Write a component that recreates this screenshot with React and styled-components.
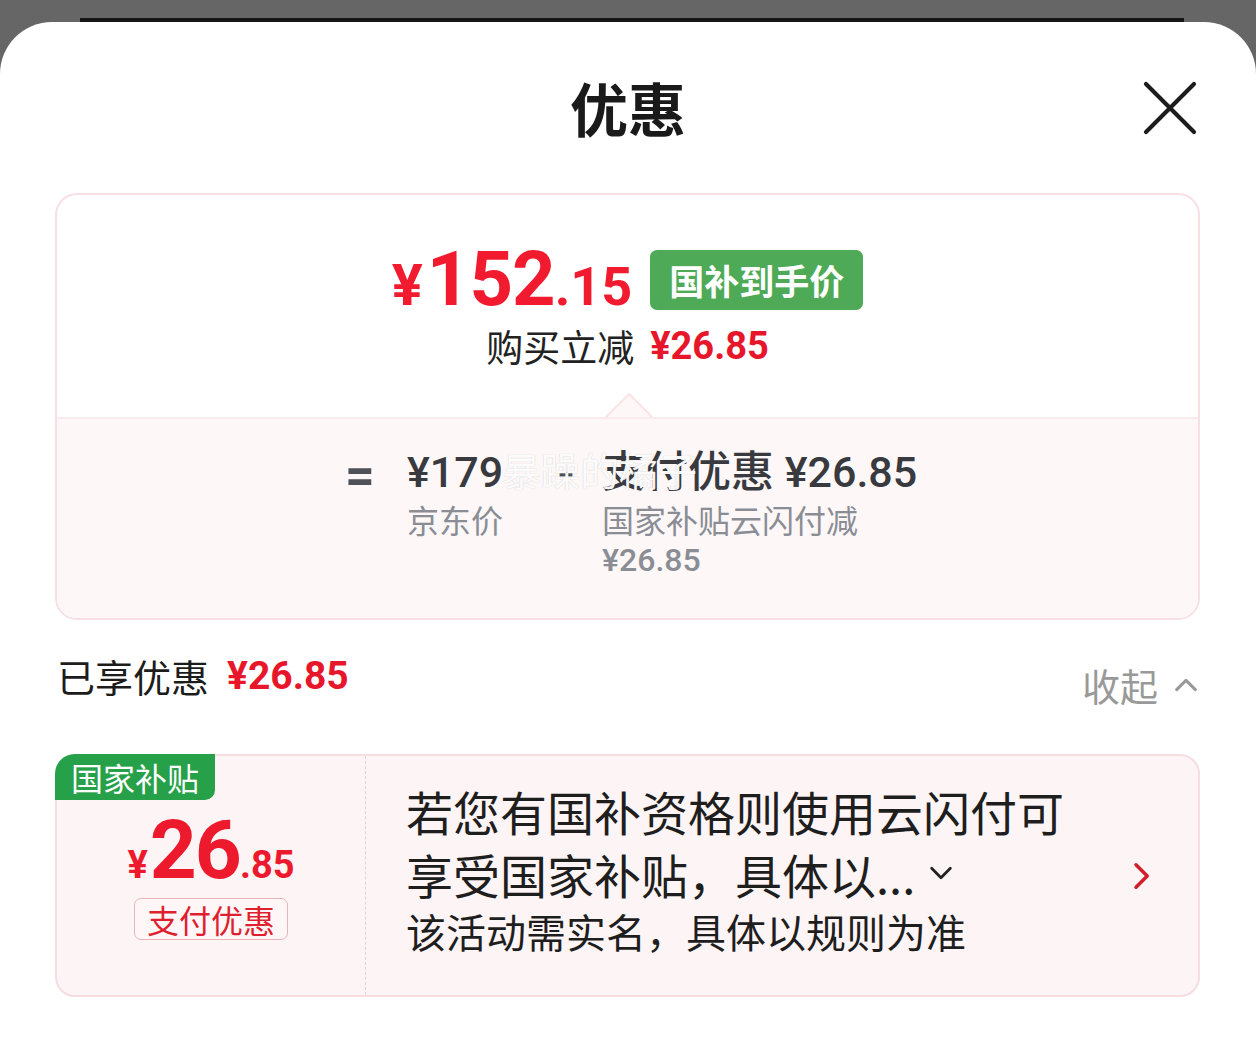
import styled, { createGlobalStyle } from 'styled-components';

const GlobalStyle = createGlobalStyle`
  html, body {
    margin: 0;
    padding: 0;
    background: #666666;
  }
  body {
    font-family: Roboto, "Noto Sans CJK SC", sans-serif;
  }
`;

const Backdrop = styled.div`
  padding-top: 18px;
  min-height: 1039px;
  box-sizing: border-box;
  display: flex;
  flex-direction: column;
`;

const BehindCard = styled.div`
  height: 4px;
  margin: 0 72px 0 80px;
  background: #151515;
`;

const Sheet = styled.div`
  flex: 1;
  background: #fff;
  border-radius: 52px 52px 0 0;
  padding-bottom: 40px;
`;

const Header = styled.div`
  position: relative;
  height: 171px;
  display: flex;
  justify-content: center;
  padding-top: 50px;
  box-sizing: border-box;
`;

const Title = styled.h1`
  margin: 0;
  font-family: "Noto Sans CJK SC", sans-serif;
  font-size: 58px;
  line-height: 70px;
  font-weight: 700;
  color: #1a1a1a;
`;

const CloseButton = styled.button`
  position: absolute;
  right: 58px;
  top: 58px;
  width: 56px;
  height: 56px;
  padding: 0;
  border: none;
  background: none;
  display: flex;
  align-items: center;
  justify-content: center;
`;

const PriceCard = styled.div`
  margin: 0 56px 0 55px;
  border: 2px solid #f8dfe4;
  border-radius: 22px;
  overflow: hidden;
`;

const PriceTop = styled.div`
  height: 222px;
  display: flex;
  flex-direction: column;
  align-items: center;
  padding-top: 46px;
  box-sizing: border-box;
  position: relative;
`;

const PriceRow = styled.div`
  display: flex;
  align-items: center;
  gap: 18px;
`;

const BigPrice = styled.div`
  color: #f21a2e;
  font-family: Roboto, sans-serif;
  font-weight: 700;
  display: flex;
  align-items: baseline;
  line-height: 1;
`;

const Yen = styled.span`
  font-size: ${(p) => p.$size}px;
  margin-right: ${(p) => p.$gap || 0}px;
`;

const Digits = styled.span`
  font-size: ${(p) => p.$size}px;
  letter-spacing: ${(p) => p.$ls || 0}px;
`;

const GreenBadge = styled.span`
  background: #4eaa57;
  color: #fff;
  font-family: "Noto Sans CJK SC", sans-serif;
  font-weight: 700;
  font-size: 35px;
  line-height: 60px;
  padding: 0 19px;
  border-radius: 7px;
  margin-top: 2px;
`;

const CutLine = styled.div`
  margin-top: 3px;
  font-family: "Noto Sans CJK SC", sans-serif;
  font-size: 37px;
  line-height: 52px;
  color: #222;
  display: flex;
  align-items: center;
  gap: 16px;
`;

const RedAmount = styled.span`
  color: #e8162b;
  font-family: Roboto, sans-serif;
  font-weight: 700;
  font-size: ${(p) => p.$size || 38}px;
`;

const Pointer = styled.svg`
  position: absolute;
  left: 548px;
  bottom: -1px;
`;

const PriceBottom = styled.div`
  background: #fdf7f8;
  border-top: 2px solid #fbeaed;
  height: 201px;
  box-sizing: border-box;
  display: flex;
  justify-content: center;
  align-items: flex-start;
  padding-top: 27px;
  padding-left: 10px;
  position: relative;
`;

const Operator = styled.span`
  font-family: Roboto, sans-serif;
  font-weight: 700;
  font-size: ${(p) => p.$size || 46}px;
  line-height: 52px;
  color: #4e5158;
  width: ${(p) => p.$w}px;
  margin-top: ${(p) => p.$mt || 6}px;
`;

const Term = styled.div`
  display: flex;
  flex-direction: column;
  width: ${(p) => p.$w}px;
`;

const TermValue = styled.span`
  font-family: Roboto, "Noto Sans CJK SC", sans-serif;
  font-weight: 500;
  font-size: 43px;
  line-height: 52px;
  color: #383a40;
  white-space: nowrap;
`;

const TermLabel = styled.span`
  font-family: "Noto Sans CJK SC", sans-serif;
  font-size: 32px;
  line-height: 42px;
  color: #8a8d94;
`;

const TermSub = styled.span`
  font-family: Roboto, sans-serif;
  font-weight: 500;
  font-size: 32px;
  line-height: 40px;
  color: #8a8d94;
`;

const Watermark = styled.span`
  position: absolute;
  left: 445px;
  top: 24px;
  font-family: "Noto Sans CJK SC", sans-serif;
  font-size: 39px;
  line-height: 52px;
  color: rgba(255, 255, 255, 0.94);
  text-shadow: 0 0 1px rgba(120, 120, 120, 0.4);
  pointer-events: none;
`;

const SummaryRow = styled.div`
  display: flex;
  justify-content: space-between;
  align-items: flex-start;
  margin: 32px 56px 0 57px;
  height: 102px;
`;

const SummaryLeft = styled.div`
  display: flex;
  align-items: center;
  gap: 18px;
  font-family: "Noto Sans CJK SC", sans-serif;
  font-size: 38px;
  line-height: 48px;
  color: #1c1c1c;
`;

const Collapse = styled.div`
  display: flex;
  align-items: center;
  gap: 14px;
  margin-top: 9px;
  font-family: "Noto Sans CJK SC", sans-serif;
  font-size: 38px;
  line-height: 48px;
  color: #999;
`;

const Coupon = styled.div`
  position: relative;
  margin: 0 56px 0 55px;
  height: 243px;
  box-sizing: border-box;
  background: #fdf4f5;
  border: 2px solid #f6dde1;
  border-radius: 20px;
  display: flex;
`;

const CouponTag = styled.span`
  position: absolute;
  left: -2px;
  top: -2px;
  width: 160px;
  height: 46px;
  background: #26a14a;
  color: #fff;
  font-family: "Noto Sans CJK SC", sans-serif;
  font-size: 32px;
  line-height: 46px;
  text-align: center;
  border-radius: 20px 0 10px 0;
`;

const CouponLeft = styled.div`
  width: 309px;
  border-right: 1px dashed #e6cfd2;
  display: flex;
  flex-direction: column;
  align-items: center;
  padding-top: 53px;
  box-sizing: border-box;
`;

const CouponAmount = styled.div`
  color: #ed1a2d;
  font-family: Roboto, sans-serif;
  font-weight: 700;
  display: flex;
  align-items: baseline;
  line-height: 1;
  height: 76px;
`;

const PayPill = styled.span`
  margin-top: 13px;
  border: 1.5px solid #e9b4b9;
  border-radius: 7px;
  background: #fff6f7;
  color: #de1f2f;
  font-family: "Noto Sans CJK SC", sans-serif;
  font-size: 32px;
  line-height: 40px;
  padding: 0 12px;
`;

const CouponBody = styled.div`
  flex: 1;
  display: flex;
  align-items: center;
  padding: 0 42px 0 40px;
`;

const CouponText = styled.div`
  flex: 1;
  font-family: "Noto Sans CJK SC", sans-serif;
  color: #1e1e1e;
  margin-top: -16px;
`;

const MainLine = styled.div`
  font-size: 47px;
  line-height: 63px;
  display: flex;
  align-items: center;
`;

const SubLine = styled.div`
  font-size: 40px;
  line-height: 52px;
`;

const DownMark = styled.span`
  display: flex;
  margin-left: 12px;
`;

const Chevron = ({ dir = 'down', color = '#222', size = 26, w = 3 }) => {
  const paths = {
    down: 'M4 8 L12 16 L20 8',
    up: 'M4 16 L12 8 L20 16',
    right: 'M8 3 L17 12 L8 21',
  };
  return (
    <svg width={size} height={size} viewBox="0 0 24 24" fill="none">
      <path d={paths[dir]} stroke={color} strokeWidth={w} strokeLinecap="round" strokeLinejoin="round" />
    </svg>
  );
};

export default function App() {
  return (
    <>
      <GlobalStyle />
      <Backdrop>
        <BehindCard />
        <Sheet>
          <Header>
            <Title>优惠</Title>
            <CloseButton aria-label="关闭">
              <svg width="54" height="54" viewBox="0 0 54 54">
                <path d="M3 3 L51 51 M51 3 L3 51" stroke="#1c1c1c" strokeWidth="4.2" strokeLinecap="round" />
              </svg>
            </CloseButton>
          </Header>

          <PriceCard>
            <PriceTop>
              <PriceRow>
                <BigPrice>
                  <Yen $size={58} $gap={4}>¥</Yen>
                  <Digits $size={76} $ls={-1}>152</Digits>
                  <Digits $size={54}>.15</Digits>
                </BigPrice>
                <GreenBadge>国补到手价</GreenBadge>
              </PriceRow>
              <CutLine>
                购买立减
                <RedAmount $size={38}>¥26.85</RedAmount>
              </CutLine>
              <Pointer width="48" height="25" viewBox="0 0 48 25">
                <path d="M0 25 L24 1 L48 25 Z" fill="#fdf7f8" />
                <path d="M0 25 L24 1 L48 25" fill="none" stroke="#fbe3e7" strokeWidth="2" />
              </Pointer>
            </PriceTop>
            <PriceBottom>
              <Operator $w={62} $size={52} $mt={4}>=</Operator>
              <Term $w={150}>
                <TermValue>¥179</TermValue>
                <TermLabel>京东价</TermLabel>
              </Term>
              <Operator $w={45} $mt={2}>-</Operator>
              <Term $w={318}>
                <TermValue>支付优惠 ¥26.85</TermValue>
                <TermLabel>国家补贴云闪付减</TermLabel>
                <TermSub>¥26.85</TermSub>
              </Term>
              <Watermark>暴躁的橘子</Watermark>
            </PriceBottom>
          </PriceCard>

          <SummaryRow>
            <SummaryLeft>
              已享优惠
              <RedAmount $size={39}>¥26.85</RedAmount>
            </SummaryLeft>
            <Collapse>
              收起
              <Chevron dir="up" color="#999" size={28} w={2.6} />
            </Collapse>
          </SummaryRow>

          <Coupon>
            <CouponTag>国家补贴</CouponTag>
            <CouponLeft>
              <CouponAmount>
                <Yen $size={38} $gap={2}>¥</Yen>
                <Digits $size={82} $ls={-2}>26</Digits>
                <Digits $size={38}>.85</Digits>
              </CouponAmount>
              <PayPill>支付优惠</PayPill>
            </CouponLeft>
            <CouponBody>
              <CouponText>
                <MainLine>若您有国补资格则使用云闪付可</MainLine>
                <MainLine>
                  享受国家补贴，具体以...
                  <DownMark>
                    <Chevron dir="down" color="#222" size={28} w={2.4} />
                  </DownMark>
                </MainLine>
                <SubLine>该活动需实名，具体以规则为准</SubLine>
              </CouponText>
              <Chevron dir="right" color="#d0202c" size={30} w={2.8} />
            </CouponBody>
          </Coupon>
        </Sheet>
      </Backdrop>
    </>
  );
}
